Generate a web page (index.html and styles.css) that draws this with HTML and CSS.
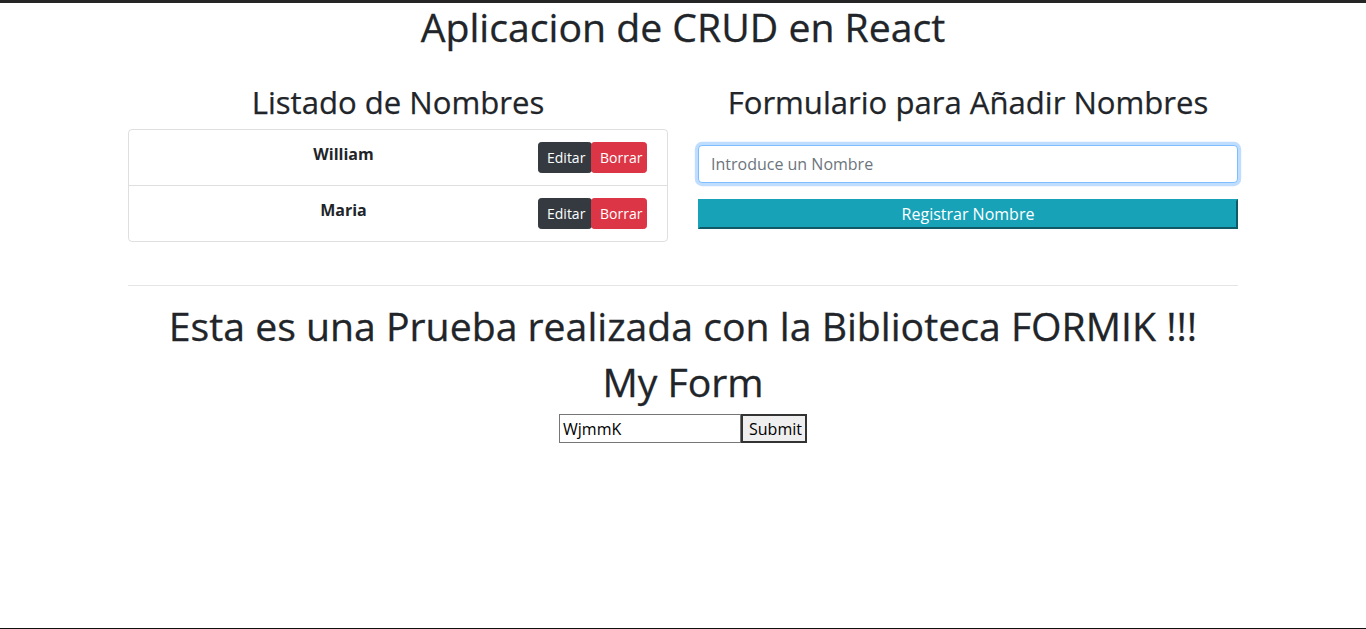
FILE: index.html
```html
<!DOCTYPE html>
<html lang="es">
<head>
<meta charset="utf-8">
<title>CRUD React</title>
<link rel="stylesheet" href="styles.css">
</head>
<body>
<div class="page">
  <div class="container">
    <h1 class="title">Aplicacion de CRUD en React</h1>
    <div class="row">
      <div class="col">
        <h2 class="sub">Listado de Nombres</h2>
        <ul class="list">
          <li class="item">
            <span class="name">William</span>
            <span class="actions"><button class="btn btn-dark">Editar</button><button class="btn btn-danger">Borrar</button></span>
          </li>
          <li class="item">
            <span class="name">Maria</span>
            <span class="actions"><button class="btn btn-dark">Editar</button><button class="btn btn-danger">Borrar</button></span>
          </li>
        </ul>
      </div>
      <div class="col">
        <h2 class="sub">Formulario para Añadir Nombres</h2>
        <form class="add-form">
          <input class="form-control focused" type="text" placeholder="Introduce un Nombre">
          <button class="btn-info" type="button">Registrar Nombre</button>
        </form>
      </div>
    </div>
    <hr class="sep">
    <h1 class="title">Esta es una Prueba realizada con la Biblioteca FORMIK !!!</h1>
    <h1 class="title">My Form</h1>
    <form class="formik">
      <input class="plain-input" type="text" value="WjmmK"><button class="plain-btn" type="button">Submit</button>
    </form>
  </div>
</div>
</body>
</html>
```

FILE: styles.css
```css
* { box-sizing: border-box; }
html, body { margin: 0; padding: 0; }
body {
  font-family: "Open Sans", "Noto Sans", "Liberation Sans", sans-serif;
  font-size: 16px;
  line-height: 1.5;
  color: #212529;
  background: #fff;
}
.page {
  min-height: 100vh;
  border-top: 3px solid #252525;
  border-bottom: 1px solid #111;
}
.container {
  width: 1140px;
  margin: 0 auto;
  padding: 0 15px;
}
.title {
  font-size: 39.2px;
  font-weight: 500;
  line-height: 48px;
  margin: 0 0 8px;
  text-align: center;
  -webkit-text-stroke: 0.3px #212529;
}
.row {
  display: flex;
  margin: 32px -15px 0;
}
.col {
  flex: 0 0 50%;
  padding: 0 15px;
}
.sub {
  font-size: 31.1px;
  font-weight: 500;
  line-height: 38.4px;
  margin: 0 0 8px;
  text-align: center;
  -webkit-text-stroke: 0.25px #212529;
}
.list {
  list-style: none;
  margin: 0;
  padding: 0;
  border: 1px solid rgba(0,0,0,.125);
  border-radius: 4px;
}
.item {
  display: flex;
  align-items: flex-start;
  padding: 12px 20px;
  height: 55px;
}
.item + .item {
  border-top: 1px solid rgba(0,0,0,.125);
  height: 56px;
}
.name {
  flex: 1;
  text-align: center;
  font-weight: 700;
  line-height: 24px;
}
.actions { display: flex; }
.btn {
  font-family: inherit;
  font-size: 14px;
  line-height: 21px;
  padding: 4px 8px;
  border: 1px solid transparent;
  border-radius: 3.2px;
  color: #fff;
  cursor: pointer;
}
.btn-dark { background: #343a40; border-color: #343a40; width: 54px; }
.btn-danger { background: #dc3545; border-color: #dc3545; width: 56px; margin-left: -1px; }
.add-form { padding-top: 16px; }
.form-control {
  display: block;
  width: 100%;
  height: 38px;
  padding: 6px 12px;
  font-family: inherit;
  font-size: 16px;
  line-height: 1.5;
  color: #495057;
  border: 1px solid #ced4da;
  border-radius: 4px;
  margin: 0 0 16px;
}
.form-control::placeholder { color: #6c757d; }
.form-control.focused {
  border-color: #80bdff;
  box-shadow: 0 0 0 3.2px rgba(0,123,255,.25);
  outline: 0;
}
.btn-info {
  display: block;
  width: 100%;
  height: 30px;
  font-family: inherit;
  font-size: 16px;
  line-height: 24px;
  padding: 1px 6px;
  color: #fff;
  background: #17a2b8;
  border: 2px solid;
  border-color: #17a2b8 #0f5a66 #0f5a66 #17a2b8;
}
.sep {
  border: 0;
  border-top: 1px solid rgba(0,0,0,.1);
  margin: 43px 0 16px;
}
.formik {
  display: flex;
  justify-content: center;
}
.plain-input {
  width: 182px;
  height: 29px;
  font-family: inherit;
  font-size: 16px;
  padding: 1px 3px;
  border: 1px solid #767676;
  color: #000;
}
.plain-btn {
  width: 66px;
  height: 29px;
  font-family: inherit;
  font-size: 16px;
  padding: 1px 6px;
  background: #efefef;
  border: 2px solid #333;
  color: #000;
}
```
